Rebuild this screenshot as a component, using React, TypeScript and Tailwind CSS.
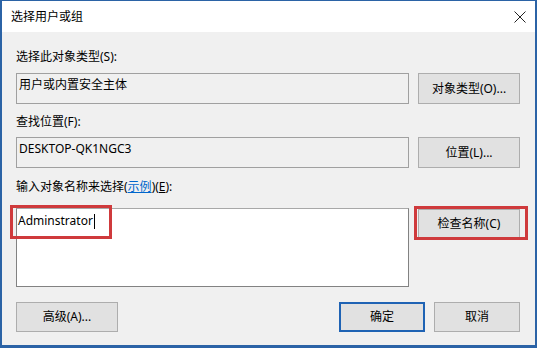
const font = "font-['Noto_Sans','Noto_Sans_CJK_SC',sans-serif]";

function Button({
  label,
  className = "",
  primary = false,
}: {
  label: string;
  className?: string;
  primary?: boolean;
}) {
  return (
    <div
      className={`flex items-center justify-center bg-[#e1e1e1] text-[12px] leading-[16px] text-black ${
        primary ? "border-2 border-[#1f63b4]" : "border border-[#adadad]"
      } ${className}`}
    >
      {label}
    </div>
  );
}

function ReadBox({ value }: { value: string }) {
  return (
    <div className="h-[31px] w-[393px] border border-[#a0a0a0] bg-[#f0f0f0] pl-[2px] pt-[3px] text-[12px] leading-[16px] text-black">
      {value}
    </div>
  );
}

export default function App() {
  return (
    <div className={`flex h-[348px] w-[537px] flex-col bg-[#2b63a6] pb-[3px] pl-[2px] pr-[2px] pt-[1px] ${font}`}>
      {/* title bar */}
      <div className="relative flex h-[31px] items-center bg-white pl-[9px]">
        <span className="text-[12px] leading-[16px] text-black">选择用户或组</span>
        <svg
          className="absolute right-[9px] top-[10px] h-[12px] w-[12px]"
          viewBox="0 0 12 12"
          fill="none"
          stroke="#222"
          strokeWidth="1"
        >
          <path d="M0.5 0.5 11.5 11.5M11.5 0.5 0.5 11.5" />
        </svg>
      </div>

      {/* body */}
      <div className="flex flex-1 flex-col bg-[#f0f0f0] pl-[14px] pr-[15px] text-[12px] leading-[16px] text-black">
        <div className="mt-[17px] h-[16px]">选择此对象类型(S):</div>
        <div className="mt-[8px] flex gap-[9px]">
          <ReadBox value="用户或内置安全主体" />
          <Button label="对象类型(O)..." className="h-[31px] w-[102px]" />
        </div>

        <div className="mt-[10px] h-[16px]">查找位置(F):</div>
        <div className="mt-[7px] flex gap-[9px]">
          <ReadBox value="DESKTOP-QK1NGC3" />
          <Button label="位置(L)..." className="h-[31px] w-[102px]" />
        </div>

        <div className="mt-[11px] h-[16px]">
          输入对象名称来选择(<span className="text-[#0066cc] underline">示例</span>)(<span className="underline">E</span>):
        </div>
        <div className="mt-[13px] flex items-start gap-[9px]">
          <div className="relative h-[79px] w-[393px] border border-[#828282] border-t-[#a8a8a8] bg-white pl-[1px] pt-[4px]">
            <span className="inline-flex items-center">
              Adminstrator
              <span className="ml-[1px] inline-block h-[15px] w-[1px] bg-black" />
            </span>
            <div className="absolute left-[-7px] top-[-4px] h-[34px] w-[102px] border-[3px] border-[#cf3a3c]" />
          </div>
          <div className="relative mt-[1px]">
            <Button label="检查名称(C)" className="h-[29px] w-[102px]" />
            <div className="absolute left-[-4px] top-[-3px] h-[34px] w-[114px] border-[3px] border-[#cf3a3c]" />
          </div>
        </div>

        <div className="mt-[15px] flex items-center justify-between">
          <Button label="高级(A)..." className="h-[30px] w-[102px]" />
          <div className="flex gap-[9px]">
            <Button label="确定" primary className="h-[30px] w-[86px]" />
            <Button label="取消" className="h-[30px] w-[86px]" />
          </div>
        </div>
      </div>
    </div>
  );
}
